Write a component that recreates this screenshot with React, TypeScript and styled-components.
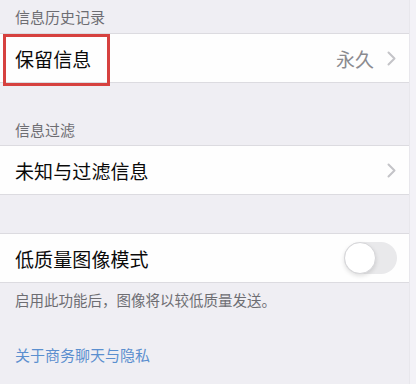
import React from "react";
import styled, { createGlobalStyle } from "styled-components";

const Global = createGlobalStyle`
  html, body { margin: 0; padding: 0; background: #f2f1f6; }
  body { font-family: "Noto Sans CJK SC", "Noto Sans", sans-serif; }
  #root { width: 416px; height: 384px; overflow: hidden; }
`;

const Page = styled.div`
  display: grid;
  grid-template-columns: 409px 1fr;
  height: 384px;
`;

const Main = styled.div`
  background: #efeef3;
  display: flex;
  flex-direction: column;
`;

const Edge = styled.div`
  background: #f3f2f7;
  border-left: 1px solid #e8e7ec;
`;

const SectionHeader = styled.div<{ $top: number; $height: number }>`
  height: ${(p) => p.$height}px;
  box-sizing: border-box;
  padding: ${(p) => p.$top}px 0 0 15px;
  font-size: 15px;
  line-height: 18px;
  color: #6d6d72;
`;

const Row = styled.div`
  position: relative;
  height: 50px;
  box-sizing: border-box;
  background: #fefefe;
  border-top: 1px solid #dcdbe0;
  border-bottom: 1px solid #dcdbe0;
  display: flex;
  align-items: center;
  padding: 0 13px 0 15px;
`;

const Label = styled.span`
  font-size: 19px;
  color: #0a0a0a;
  flex: 1;
  letter-spacing: 0.1px;
`;

const Value = styled.span`
  font-size: 19px;
  color: #8b8b90;
  margin-right: 13px;
`;

const Highlight = styled.div`
  position: absolute;
  left: 3px;
  top: 0;
  width: 107px;
  height: 52px;
  box-sizing: border-box;
  border: 3px solid #d6413f;
  pointer-events: none;
`;

const Spacer = styled.div<{ $h: number }>`
  height: ${(p) => p.$h}px;
`;

const Track = styled.div`
  width: 53px;
  height: 32px;
  border-radius: 16px;
  background: #e9e9eb;
  position: relative;
  margin-right: -1px;
`;

const Knob = styled.div`
  position: absolute;
  left: 0;
  top: 0;
  width: 32px;
  height: 32px;
  box-sizing: border-box;
  border-radius: 50%;
  background: #ffffff;
  border: 1px solid #d6d6d9;
  box-shadow: 0 2px 4px rgba(0, 0, 0, 0.12);
`;

const Footer = styled.div`
  padding: 8px 15px 0 15px;
  font-size: 14.5px;
  line-height: 18px;
  color: #6d6d72;
`;

const Link = styled.div`
  margin-top: 36px;
  padding-left: 15px;
  font-size: 15px;
  line-height: 20px;
  color: #5b8fcf;
`;

const Chevron = () => (
  <svg width="9" height="15" viewBox="0 0 9 15" fill="none">
    <path d="M1.5 1.5 L7.5 7.5 L1.5 13.5" stroke="#c4c4c8" strokeWidth="2" strokeLinecap="round" strokeLinejoin="round" />
  </svg>
);

export default function App() {
  return (
    <>
      <Global />
      <Page>
        <Main>
          <SectionHeader $top={8} $height={33}>信息历史记录</SectionHeader>
          <Row>
            <Label>保留信息</Label>
            <Value>永久</Value>
            <Chevron />
            <Highlight />
          </Row>
          <SectionHeader $top={38} $height={62}>信息过滤</SectionHeader>
          <Row>
            <Label>未知与过滤信息</Label>
            <Chevron />
          </Row>
          <Spacer $h={38} />
          <Row>
            <Label>低质量图像模式</Label>
            <Track>
              <Knob />
            </Track>
          </Row>
          <Footer>启用此功能后，图像将以较低质量发送。</Footer>
          <Link>关于商务聊天与隐私</Link>
        </Main>
        <Edge />
      </Page>
    </>
  );
}
